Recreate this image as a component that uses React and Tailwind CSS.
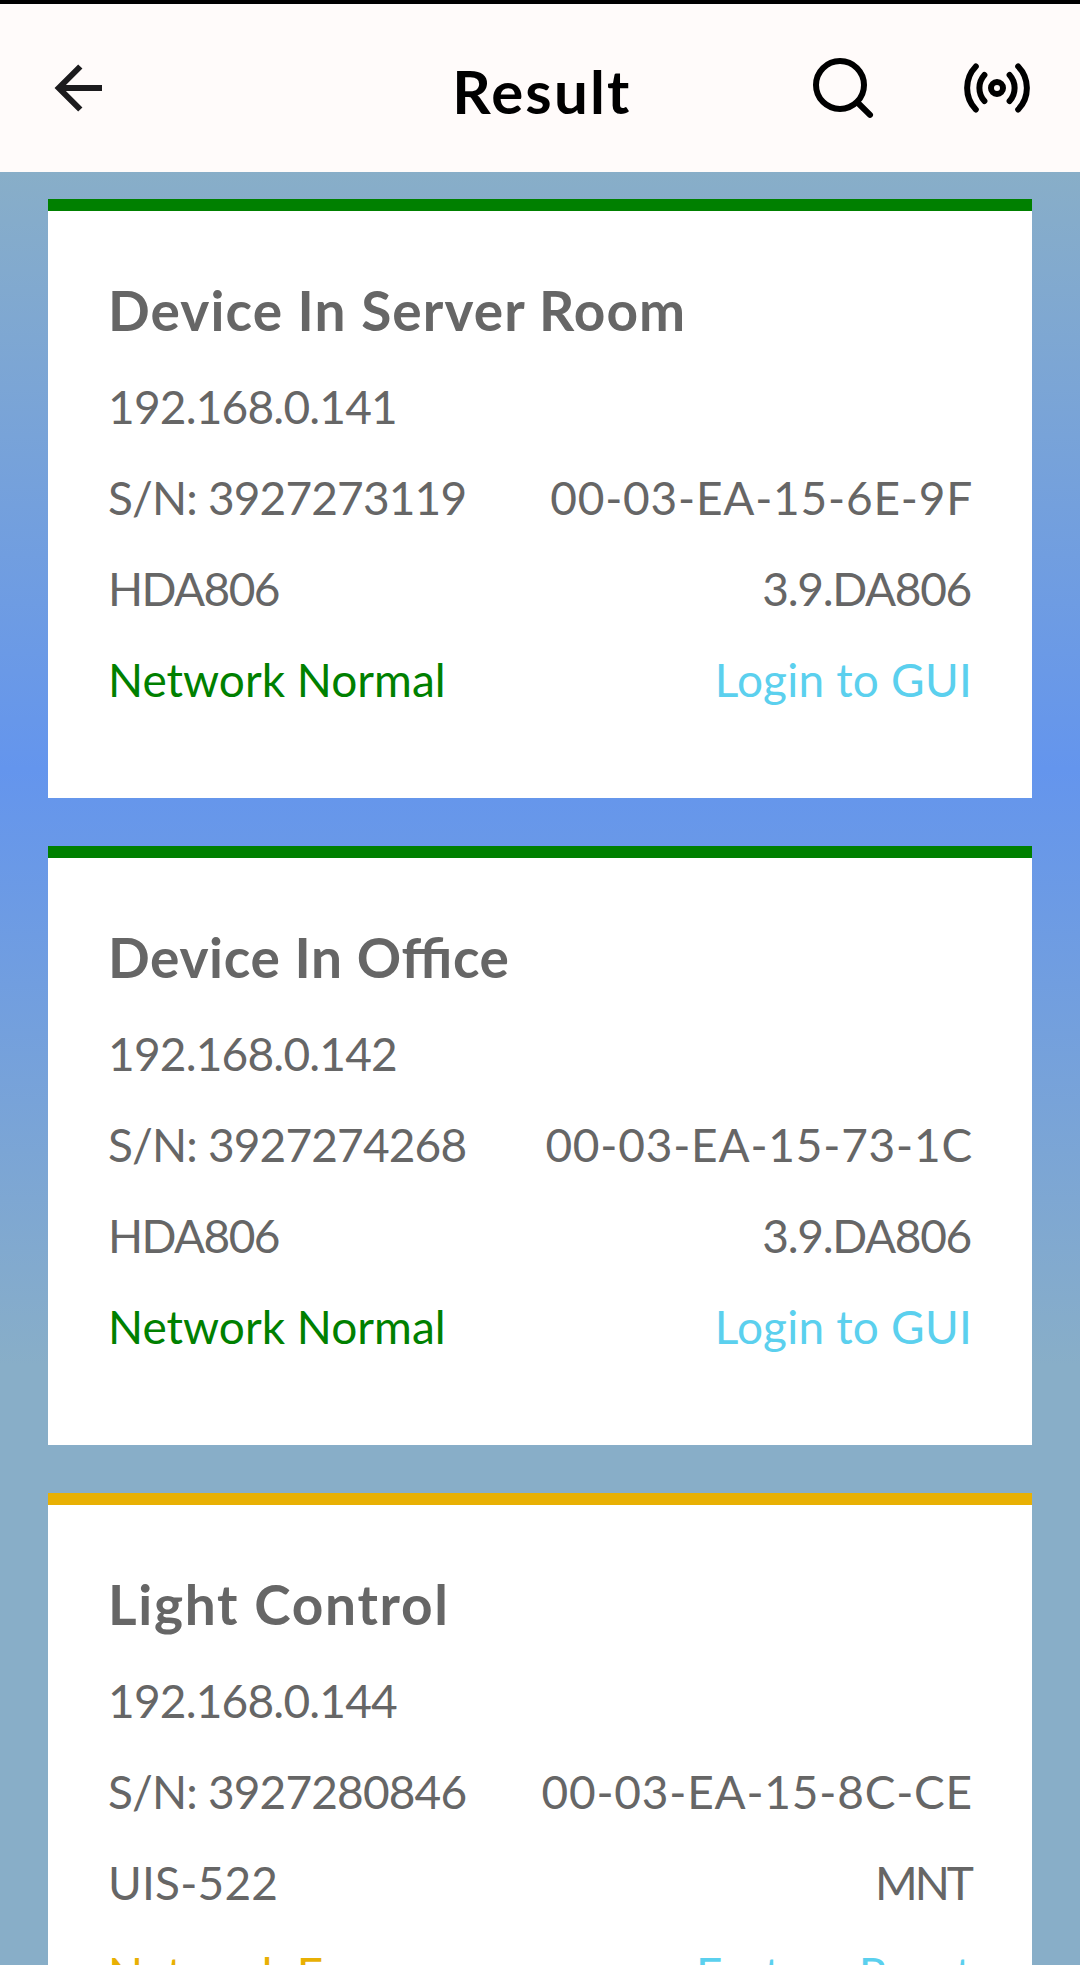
const devices = [
  {
    name: "Device In Server Room",
    ip: "192.168.0.141",
    serial: "3927273119",
    mac: "00-03-EA-15-6E-9F",
    model: "HDA806",
    version: "3.9.DA806",
    status: "Network Normal",
    action: "Login to GUI",
    ok: true,
    nameClass: "tracking-[1.1px]",
    modelClass: "tracking-[-1.6px]",
    versionClass: "tracking-[-1.3px] mr-px",
  },
  {
    name: "Device In Office",
    ip: "192.168.0.142",
    serial: "3927274268",
    mac: "00-03-EA-15-73-1C",
    model: "HDA806",
    version: "3.9.DA806",
    status: "Network Normal",
    action: "Login to GUI",
    ok: true,
    nameClass: "tracking-[0.65px]",
    modelClass: "tracking-[-1.6px]",
    versionClass: "tracking-[-1.3px] mr-px",
  },
  {
    name: "Light Control",
    ip: "192.168.0.144",
    serial: "3927280846",
    mac: "00-03-EA-15-8C-CE",
    model: "UIS-522",
    version: "MNT",
    status: "Network Error",
    action: "Factory Reset",
    ok: false,
    nameClass: "tracking-[1.7px]",
    modelClass: "tracking-[0.2px]",
    versionClass: "tracking-[-3px] mr-px",
  },
];

function BackIcon() {
  return (
    <svg width="52" height="52" viewBox="0 0 52 52" fill="none" stroke="#1c1b1d" strokeWidth="6">
      <path d="M30.3 4.5 8.8 26l21.5 21.5M10 26h42" />
    </svg>
  );
}

function SearchIcon() {
  return (
    <svg
      className="overflow-visible"
      width="64"
      height="64"
      viewBox="0 0 64 64"
      fill="none"
      stroke="#000"
      strokeWidth="6"
      strokeLinecap="round"
    >
      <circle cx="32" cy="29" r="24" />
      <path d="m49.5 46.5 12.5 12.3" />
    </svg>
  );
}

function BroadcastIcon() {
  return (
    <svg width="72" height="56" viewBox="0 0 72 56" fill="none" stroke="#000" strokeWidth="6" strokeLinecap="round">
      <circle cx="36" cy="28" r="6" />
      <path d="M23.4 15a19.4 19.4 0 0 0 0 26M48.6 15a19.4 19.4 0 0 1 0 26" />
      <path d="M14.8 6.5a31 31 0 0 0 0 43M57.2 6.5a31 31 0 0 1 0 43" />
    </svg>
  );
}

function Header() {
  return (
    <header className="grid h-[172px] grid-cols-3 items-center border-t-4 border-black bg-[#fffbfa] pl-[50px] pr-[47px]">
      <button className="justify-self-start">
        <BackIcon />
      </button>
      <h1 className="justify-self-center pl-px pt-[5px] text-[60px] font-bold leading-none tracking-[2.2px]">
        Result
      </h1>
      <div className="flex items-center gap-[89px] justify-self-end">
        <button>
          <SearchIcon />
        </button>
        <button>
          <BroadcastIcon />
        </button>
      </div>
    </header>
  );
}

function DeviceCard({ device }) {
  return (
    <section
      className={`h-[599px] shrink-0 border-t-12 bg-white px-[60px] pt-[49px] text-[46px] leading-[91px] text-[#666] ${
        device.ok ? "border-[#008000]" : "border-[#e8b004]"
      }`}
    >
      <h2 className={`text-[55px] font-bold leading-[101px] [font-feature-settings:'liga'] ${device.nameClass}`}>
        {device.name}
      </h2>
      <p className="tracking-[-0.8px]">{device.ip}</p>
      <div className="flex justify-between">
        <span className="tracking-[-0.85px]">S/N: {device.serial}</span>
        <span className="-mr-px tracking-[0.8px]">{device.mac}</span>
      </div>
      <div className="flex justify-between">
        <span className={device.modelClass}>{device.model}</span>
        <span className={device.versionClass}>{device.version}</span>
      </div>
      <div className="flex justify-between">
        <span className={device.ok ? "text-[#008000]" : "text-[#e8b004]"}>{device.status}</span>
        <a className="tracking-[0.2px] text-[#5bd0ee]">{device.action}</a>
      </div>
    </section>
  );
}

export default function App() {
  return (
    <div className="flex h-[1965px] w-[1080px] flex-col overflow-hidden font-[Lato,sans-serif]">
      <Header />
      <main className="flex min-h-0 flex-1 flex-col gap-12 overflow-hidden bg-[linear-gradient(to_bottom,#88aec8_0px,#6495ed_597px,#88aec8_1193px)] px-12 pt-[27px]">
        {devices.map((device) => (
          <DeviceCard key={device.serial} device={device} />
        ))}
      </main>
    </div>
  );
}
